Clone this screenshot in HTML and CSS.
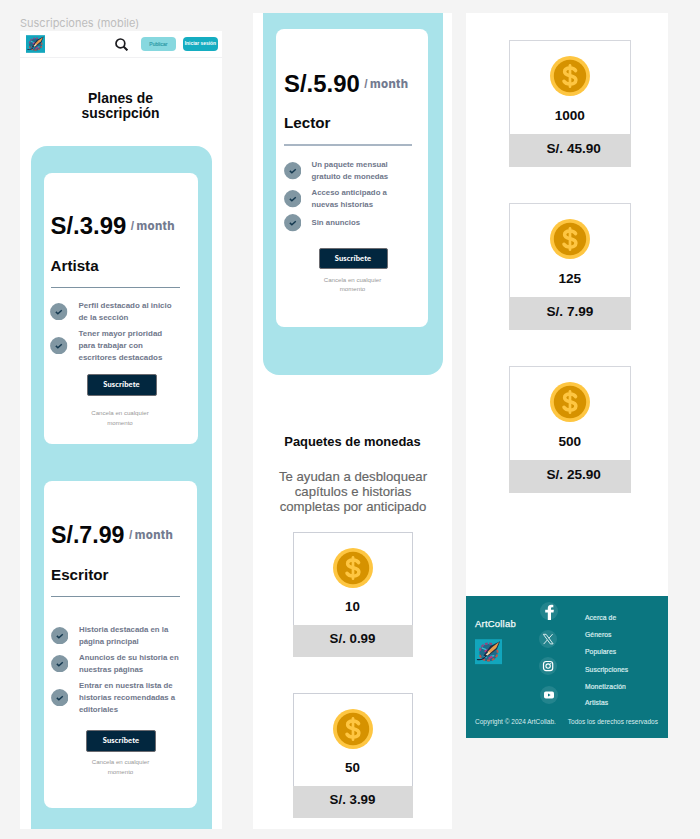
FILE: index.html
```html
<!DOCTYPE html>
<html lang="es">
<head>
<meta charset="utf-8">
<title>Suscripciones (mobile)</title>
<link rel="stylesheet" href="styles.css">
</head>
<body>
<svg class="defs" width="0" height="0" aria-hidden="true">
  <symbol id="check" viewBox="0 0 18 18">
    <circle cx="9" cy="9" r="8.900" fill="#8197a3"/>
    <path d="M6 9.100l2.100 1.900 4-3.600" fill="none" stroke="#14384f" stroke-width="1.500"/>
  </symbol>
  <symbol id="coin" viewBox="0 0 40 40">
    <circle cx="20" cy="20" r="20" fill="#fec642"/>
    <circle cx="20" cy="20" r="16.200" fill="#d69200"/>
    <path d="M25.600 14.600C24.600 12.700 22.600 12 20.100 12c-3.200 0-5.500 1.400-5.500 3.800 0 5.300 11.300 2.700 11.300 8.100 0 2.600-2.500 4.100-5.800 4.100-2.700 0-4.900-.8-6.100-2.700" fill="none" stroke="#fec642" stroke-width="3.500" stroke-linecap="round"/>
    <path d="M20 9.300v21.400" fill="none" stroke="#fec642" stroke-width="2.700" stroke-linecap="round"/>
  </symbol>
  <symbol id="logo" viewBox="0 0 28 26">
    <rect width="28" height="26" fill="#12a6bd"/>
    <ellipse cx="14" cy="14" rx="9.500" ry="9" fill="#1d6b8a"/>
    <path d="M5 12C6 6 12 3 18 5" fill="none" stroke="#8a4a84" stroke-width="2.200" stroke-dasharray="3 1.500"/>
    <path d="M23 11c2 6-3 11-9 11S5 19 5 15" fill="none" stroke="#b8584c" stroke-width="2" stroke-dasharray="3 2"/>
    <path d="M7 9l5 2M8 17l4 2M16 18l4-1" stroke="#37bfd4" stroke-width="1.500"/>
    <path d="M10 13l3-2M14 20l4-2" stroke="#b73384" stroke-width="2"/>
    <path d="M2 21c5 1 8-1 10-5" fill="none" stroke="#182442" stroke-width="1.200"/>
    <path d="M8 18L16 7l10-5-3 8-9 7z" fill="#1c2b48"/>
    <path d="M13 13l5-5 7-5-3 6-7 6z" fill="#e89b4b"/>
    <path d="M11 16l3-3 2 1-3 3z" fill="#f3ddb0"/>
  </symbol>
</svg>

<main class="board">
  <div class="col col-a">
    <div class="frame-label">Suscripciones (mobile)</div>
    <section class="phone phone-a">
      <header class="topbar">
        <svg class="top-logo"><use href="#logo"/></svg>
        <svg class="search" viewBox="0 0 13 13"><circle cx="5.400" cy="5.400" r="4.400" fill="none" stroke="#1b1b1f" stroke-width="1.700"/><path d="M8.500 8.500l3.900 3.900" stroke="#1b1b1f" stroke-width="2"/></svg>
        <span class="pill pill-light">Publicar</span>
        <span class="pill pill-dark">Iniciar sesión</span>
      </header>
      <h1 class="title">Planes de<br>suscripción</h1>
      <div class="panel panel-top">
        <article class="plan artista">
          <div class="price">S/.3.99<span class="slash">/</span><span class="month">month</span></div>
          <h2 class="name">Artista</h2>
          <hr class="rule">
          <ul class="perks">
            <li><svg class="tick"><use href="#check"/></svg><span>Perfil destacado al inicio<br>de la sección</span></li>
            <li><svg class="tick"><use href="#check"/></svg><span>Tener mayor prioridad<br>para trabajar con<br>escritores destacados</span></li>
          </ul>
          <div class="cta">Suscríbete</div>
          <p class="note">Cancela en cualquier<br>momento</p>
        </article>
        <article class="plan escritor">
          <div class="price">S/.7.99<span class="slash">/</span><span class="month">month</span></div>
          <h2 class="name">Escritor</h2>
          <hr class="rule">
          <ul class="perks">
            <li><svg class="tick"><use href="#check"/></svg><span>Historia destacada en la<br>página principal</span></li>
            <li><svg class="tick"><use href="#check"/></svg><span>Anuncios de su historia en<br>nuestras páginas</span></li>
            <li><svg class="tick"><use href="#check"/></svg><span>Entrar en nuestra lista de<br>historias recomendadas a<br>editoriales</span></li>
          </ul>
          <div class="cta">Suscríbete</div>
          <p class="note">Cancela en cualquier<br>momento</p>
        </article>
      </div>
    </section>
  </div>

  <section class="phone phone-b">
    <div class="panel panel-bottom">
      <article class="plan lector">
        <div class="price">S/.5.90<span class="slash">/</span><span class="month">month</span></div>
        <h2 class="name">Lector</h2>
        <hr class="rule">
        <ul class="perks">
          <li><svg class="tick"><use href="#check"/></svg><span>Un paquete mensual<br>gratuito de monedas</span></li>
          <li><svg class="tick"><use href="#check"/></svg><span>Acceso anticipado a<br>nuevas historias</span></li>
          <li><svg class="tick"><use href="#check"/></svg><span>Sin anuncios</span></li>
        </ul>
        <div class="cta">Suscríbete</div>
        <p class="note">Cancela en cualquier<br>momento</p>
      </article>
    </div>
    <h2 class="packs-title">Paquetes de monedas</h2>
    <p class="packs-sub">Te ayudan a desbloquear<br>capítulos e historias<br>completas por anticipado</p>
    <div class="packs">
      <div class="pack"><svg class="coin"><use href="#coin"/></svg><b class="qty">10</b><div class="cost">S/. 0.99</div></div>
      <div class="pack"><svg class="coin"><use href="#coin"/></svg><b class="qty">50</b><div class="cost">S/. 3.99</div></div>
    </div>
  </section>

  <section class="phone phone-c">
    <div class="packs packs-large">
      <div class="pack"><svg class="coin"><use href="#coin"/></svg><b class="qty">1000</b><div class="cost">S/. 45.90</div></div>
      <div class="pack"><svg class="coin"><use href="#coin"/></svg><b class="qty">125</b><div class="cost">S/. 7.99</div></div>
      <div class="pack"><svg class="coin"><use href="#coin"/></svg><b class="qty">500</b><div class="cost">S/. 25.90</div></div>
    </div>
    <footer class="footer">
      <div class="foot-main">
        <div class="brand"><span>ArtCollab</span><svg class="foot-logo"><use href="#logo"/></svg></div>
        <div class="social">
          <svg viewBox="0 0 18 18"><circle class="halo" cx="9" cy="9" r="9"/><path d="M13.300 3c-3.900-.7-5.500.7-5.500 3.300v1.500H5.200v2.800h2.600V18H11v-7.400h2.500l.4-2.800H11V6.500c0-1 .6-1.300 2.300-1.100z" fill="#fff"/></svg>
          <svg class="shift" viewBox="0 0 18 18"><circle class="halo" cx="9" cy="9" r="9"/><path d="M4.300 4.300h2.800l7 9.600h-2.800zM13.600 4.100L9.900 8.300M8.300 10l-3.700 4.100" fill="none" stroke="#d7eaec" stroke-width="1"/></svg>
          <svg class="shift" viewBox="0 0 18 18"><circle class="halo" cx="9" cy="9" r="9"/><rect x="4.500" y="4.500" width="9.200" height="9.200" rx="2.600" fill="none" stroke="#fff" stroke-width="1.200"/><circle cx="9.100" cy="9.100" r="2.200" fill="none" stroke="#fff" stroke-width="1.100"/><circle cx="11.700" cy="6.500" r=".6" fill="#fff"/></svg>
          <svg class="tube" viewBox="0 0 18 18"><circle class="halo" cx="9" cy="9" r="9"/><rect x="4" y="5.500" width="10" height="7" rx="1.800" fill="#fff"/><path d="M8 7.500v3l2.600-1.500z" fill="#0b7680"/></svg>
        </div>
        <nav class="links"><a>Acerca de</a><a>Géneros</a><a>Populares</a><a>Suscripciones</a><a>Monetización</a><a>Artistas</a></nav>
      </div>
      <div class="legal"><span>Copyright © 2024 ArtCollab.</span><span>Todos los derechos reservados</span></div>
    </footer>
  </section>
</main>
</body>
</html>
```

FILE: styles.css
```css
* { box-sizing: border-box; margin: 0; padding: 0; }
body {
  background: #f4f4f4;
  font-family: "Liberation Sans", sans-serif;
  color: #0c0c0e;
  white-space: nowrap;
}
.defs { display: block; }
svg { display: block; flex: none; }

.board { display: flex; align-items: flex-start; padding: 13px 0 0 20px; height: 839px; overflow: hidden; }
.phone { background: #fff; overflow: hidden; }
.phone-a { width: 202px; height: 798px; }
.phone-b { width: 199px; height: 816px; margin-left: 31px; }
.phone-c { width: 202px; height: 725px; margin-left: 14px; }

.frame-label { height: 18px; font: 400 11px/20px Inter, sans-serif; color: #bdbdbd; }

.topbar { display: flex; height: 27px; padding: 4px 4px 0 6px; border-bottom: 1px solid #f1f1f3; }
.top-logo { width: 19px; height: 18px; }
.search { width: 13px; height: 13px; margin: 3px 0 0 69.500px; }
.pill { height: 14px; border-radius: 4px; text-align: center; font-size: 5px; line-height: 14px; font-weight: 700; margin-top: 2px; }
.pill-light { width: 36px; margin-left: 13px; background: #87d8df; color: #2b98a5; font-weight: 400; -webkit-text-stroke: .15px; }
.pill-dark { width: 35.500px; margin-left: 6.500px; background: #15adc1; color: #fff; font-size: 4.900px; }

.title { margin-top: 33px; text-align: center; font-size: 13.900px; line-height: 15px; padding-right: 1px; }

.panel { background: #a9e3ea; }
.panel-top { margin: 24.500px 0 0 10.500px; width: 181.500px; height: 700px; border-radius: 16px 16px 0 0; padding: 27.500px 0 0 13px; }
.panel-bottom { margin-left: 10px; width: 179.500px; height: 361.500px; border-radius: 0 0 16px 16px; padding: 16px 0 0 13px; }

.plan { background: #fff; border-radius: 8px; }
.artista { width: 153.500px; height: 271px; margin-left: .5px; padding: 41px 0 0 6.500px; }
.escritor { width: 153.500px; height: 327.500px; margin-top: 36.500px; padding: 42.500px 0 0 7.500px; }
.lector { width: 151.500px; height: 297.500px; padding: 43px 0 0 8px; }

.price { display: flex; align-items: center; height: 24px; font-size: 23.900px; font-weight: 700; line-height: 24px; color: #060608; }
.slash { margin-left: 4.500px; font-size: 12px; color: #7b8093; }
.month { margin-left: 2.500px; font: 800 11.500px/24px Inter, sans-serif; letter-spacing: .3px; color: #737b90; }
.name { margin-top: 20px; font-size: 15.200px; line-height: 16px; }
.rule { border: 0; height: 1px; width: 129px; margin-top: 13px; background: #7e93a2; }
.perks { list-style: none; margin-top: 11.500px; display: grid; gap: 4px; }
.perks li { display: flex; align-items: center; font-size: 7.950px; font-weight: 700; line-height: 12px; color: #6f778b; }
.tick { width: 17.500px; height: 17.500px; margin: 0 11px 0 -.5px; }
.cta { width: 70px; height: 21.500px; margin: 10.500px 0 0 36px; border: 1px solid #6b6b70; border-radius: 2px; background: #02273f; color: #fff; text-align: center; font: 900 7.500px/19.500px Lato, sans-serif; letter-spacing: .1px; }
.note { width: 70px; margin: 12.500px 0 0 34.500px; text-align: center; font-size: 6.120px; line-height: 9.500px; color: #999; }

.escritor .price { font-size: 23.200px; }
.escritor .name { margin-top: 19.500px; }
.escritor .rule { margin-top: 13.500px; }
.escritor .perks { margin-top: 26.500px; }
.escritor .perks li { font-size: 7.800px; }
.escritor .tick { margin-left: -.5px; margin-right: 11px; }
.escritor .cta { margin: 14.500px 0 0 35px; }
.escritor .note { margin: 5.500px 0 0 34.500px; }

.lector .name { margin-top: 19px; }
.lector .rule { width: 127.500px; height: 1.500px; background: #a9b6c4; }
.lector .perks { margin-top: 13.500px; }
.lector .perks li { font-size: 7.800px; }
.lector .perks li:last-child { height: 17px; margin-top: -.5px; }
.lector .tick { margin-left: -.5px; margin-right: 10.500px; }
.lector .cta { width: 69px; margin: 16px 0 0 34.500px; }
.lector .note { margin: 5.500px 0 0 33.500px; }

.packs-title { margin-top: 59.500px; text-align: center; font-size: 12.930px; line-height: 16px; }
.packs-sub { margin-top: 18.500px; text-align: center; font-size: 13.200px; line-height: 15px; color: #666; padding-left: 1px; -webkit-text-stroke: .15px; }
.packs { display: grid; gap: 36px; margin: 18.500px 0 0 39.500px; width: 120px; }
.pack { display: flex; flex-direction: column; align-items: center; height: 125px; border: 1px solid #cccfd7; }
.coin { width: 40px; height: 40px; margin-top: 15px; }
.qty { height: 16px; margin-top: 11px; font-size: 13.400px; line-height: 16px; }
.cost { align-self: stretch; margin: 10px -1px -1px; height: 32px; background: #d9d9d9; text-align: center; font-size: 13.300px; font-weight: 700; line-height: 27px; }
.packs-large { width: 121.500px; margin: 27px 0 0 43px; }
.packs-large .pack { height: 127px; border-color: #d5d7dd; }
.packs-large .qty { margin-top: 12px; font-size: 13.600px; }
.packs-large .cost { height: 33px; text-align: left; padding-left: 37.500px; font-size: 13.600px; line-height: 29px; }

.footer { margin-top: 102.500px; height: 142.500px; background: #0b7680; color: #d9ecee; }
.foot-main { display: flex; height: 120px; padding: 6.500px 0 0 9px; }
.brand { width: 64.500px; padding-top: 16px; font-size: 9.500px; line-height: 12px; letter-spacing: .2px; color: #f2fafa; -webkit-text-stroke: .25px; }
.foot-logo { width: 27px; height: 25.500px; margin-top: 9px; }
.social { width: 45.500px; }
.social svg { width: 18px; height: 18px; margin-bottom: 9.500px; }
.social .shift { margin-left: -1px; }
.social .tube { margin-top: 11px; }
.halo { fill: #23848d; }
.links { display: grid; grid-template-rows: 17.800px 17px 17.500px 17px 16.300px 16px; padding-top: 7.500px; font-size: 6.750px; line-height: 16px; letter-spacing: .1px; -webkit-text-stroke: .2px; }
.legal { display: flex; justify-content: space-between; padding: 0 10px 0 9px; font-size: 6.520px; line-height: 12px; }
```
